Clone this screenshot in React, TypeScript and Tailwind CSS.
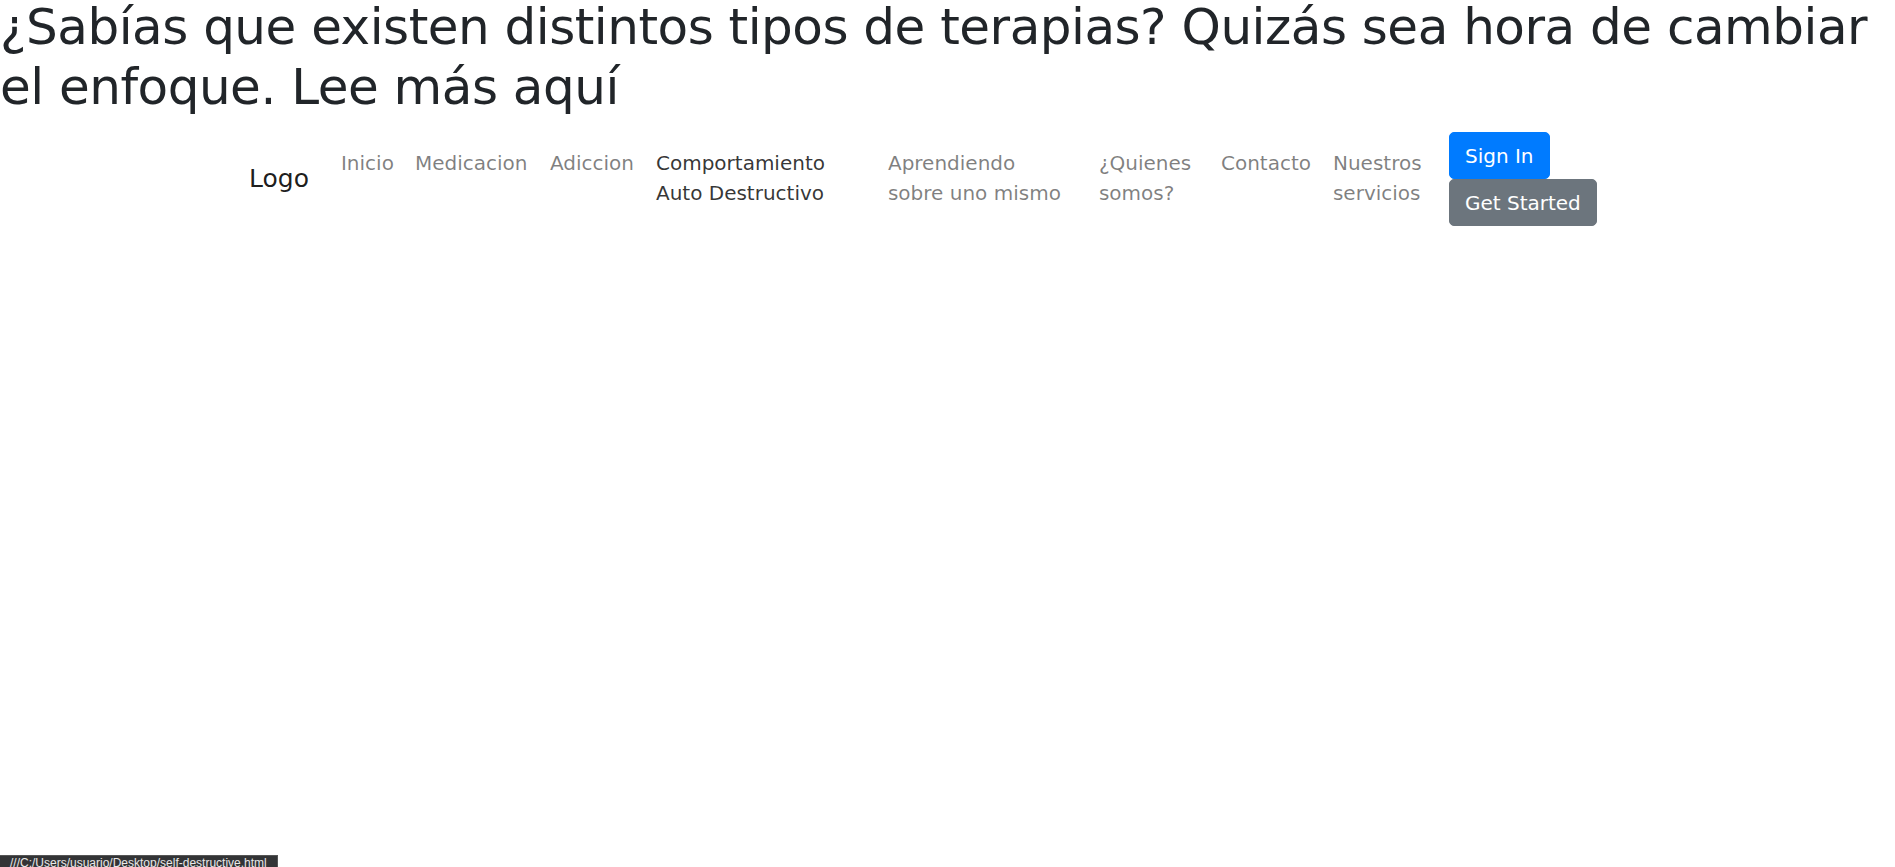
import React from "react";

const links = [
    { lines: ["Inicio"], w: "w-[74px]" },
    { lines: ["Medicacion"], w: "w-[135px]" },
    { lines: ["Adiccion"], w: "w-[106px]" },
    { lines: ["Comportamiento", "Auto Destructivo"], w: "w-[232px]", active: true },
    { lines: ["Aprendiendo", "sobre uno mismo"], w: "w-[211px]" },
    { lines: ["¿Quienes", "somos?"], w: "w-[122px]" },
    { lines: ["Contacto"], w: "w-[112px]" },
    { lines: ["Nuestros", "servicios"], w: "w-[126px]" },
];

export default function App() {
    return (
        <div className="min-h-[867px] bg-white text-[#212529] font-['DejaVu_Sans',sans-serif]">
            <h1 className="text-[50px] leading-[60px] tracking-[-0.5px] font-normal -mt-[3px] h-[120px]">
                ¿Sabías que existen distintos tipos de terapias? Quizás sea hora de cambiar el enfoque. Lee más aquí
            </h1>

            <nav className="flex items-center pl-[249px] pt-[15px]">
                <a className="text-[25px] leading-[30px] text-black/90 mr-[22px]">Logo</a>
                <ul className="flex">
                    {links.map((link) => (
                        <li key={link.lines[0]} className={link.w}>
                            <a
                                className={
                                    "block px-[10px] pt-[9px] pb-[11px] text-[20px] leading-[30px] whitespace-nowrap " +
                                    (link.active ? "text-black/80" : "text-black/50")
                                }
                            >
                                {link.lines.map((line) => (
                                    <span key={line} className="block">
                                        {line}
                                    </span>
                                ))}
                            </a>
                        </li>
                    ))}
                </ul>
                <div className="flex flex-col items-start">
                    <button className="bg-[#007bff] text-white text-[20px] leading-[30px] px-[15px] py-[7.5px] rounded-[5px] border border-[#007bff]">
                        Sign In
                    </button>
                    <button className="bg-[#6c757d] text-white text-[20px] leading-[30px] px-[15px] py-[7.5px] rounded-[5px] border border-[#6c757d]">
                        Get Started
                    </button>
                </div>
            </nav>

            <div className="fixed left-0 bottom-0 w-[278px] h-[12px] overflow-hidden bg-[#333436] border-t border-r border-[#555] text-[#e8e8e8] text-[12px] leading-[14px] pl-[10px] font-['Liberation_Sans',sans-serif]">
                ///C:/Users/usuario/Desktop/self-destructive.html
            </div>
        </div>
    );
}
